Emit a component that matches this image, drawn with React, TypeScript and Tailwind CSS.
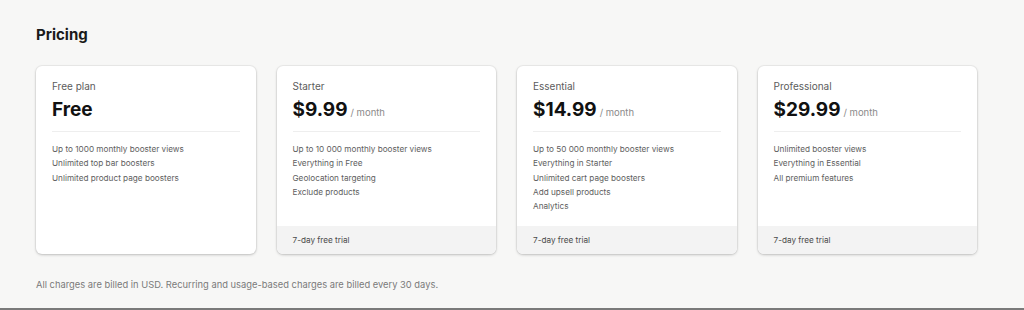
import React from 'react';

interface Plan {
  name: string;
  price: string;
  perMonth: boolean;
  features: string[];
  trial?: string;
}

const plans: Plan[] = [
  {
    name: 'Free plan',
    price: 'Free',
    perMonth: false,
    features: ['Up to 1000 monthly booster views', 'Unlimited top bar boosters', 'Unlimited product page boosters'],
  },
  {
    name: 'Starter',
    price: '$9.99',
    perMonth: true,
    features: ['Up to 10 000 monthly booster views', 'Everything in Free', 'Geolocation targeting', 'Exclude products'],
    trial: '7-day free trial',
  },
  {
    name: 'Essential',
    price: '$14.99',
    perMonth: true,
    features: [
      'Up to 50 000 monthly booster views',
      'Everything in Starter',
      'Unlimited cart page boosters',
      'Add upsell products',
      'Analytics',
    ],
    trial: '7-day free trial',
  },
  {
    name: 'Professional',
    price: '$29.99',
    perMonth: true,
    features: ['Unlimited booster views', 'Everything in Essential', 'All premium features'],
    trial: '7-day free trial',
  },
];

const PlanCard: React.FC<{ plan: Plan }> = ({ plan }) => (
  <div className="flex h-[188px] flex-col overflow-hidden rounded-[6px] bg-white shadow-[0_1px_3px_rgba(0,0,0,0.2),0_0_0_1px_rgba(0,0,0,0.04)]">
    <div className="flex-1 px-4 pt-[14px]">
      <div className="text-[10px] leading-[12px] text-[#5c5c5c]">{plan.name}</div>
      <div className="mt-[7px] flex items-baseline gap-[3px]">
        <span className="text-[19px] font-bold leading-[22px] text-[#111]">{plan.price}</span>
        {plan.perMonth && <span className="text-[9.5px] text-[#8a8a8a]">/ month</span>}
      </div>
      <div className="mt-[10px] border-t border-[#eeeeee]" />
      <ul className="mt-[11px] space-y-[2.3px]">
        {plan.features.map((f) => (
          <li key={f} className="text-[8.2px] leading-[12px] text-[#5e5e5e]">
            {f}
          </li>
        ))}
      </ul>
    </div>
    {plan.trial && (
      <div className="flex h-[28px] items-center bg-[#f3f3f3] px-4 text-[8.2px] text-[#4a4a4a]">{plan.trial}</div>
    )}
  </div>
);

export default function App() {
  return (
    <div
      className="flex h-[310px] w-[1024px] flex-col border-b-2 border-[#7a7a7a] bg-[#f7f7f6] px-9"
      style={{ fontFamily: 'Inter, "Noto Sans", sans-serif' }}
    >
      <h1 className="mt-[26px] text-[15px] font-bold leading-[18px] text-[#1a1a1a]">Pricing</h1>
      <div className="mt-[22px] grid w-[941px] grid-cols-4 gap-[21px]">
        {plans.map((p) => (
          <PlanCard key={p.name} plan={p} />
        ))}
      </div>
      <p className="mt-[24px] text-[9.35px] text-[#7a7a7a]">
        All charges are billed in USD. Recurring and usage-based charges are billed every 30 days.
      </p>
    </div>
  );
}
